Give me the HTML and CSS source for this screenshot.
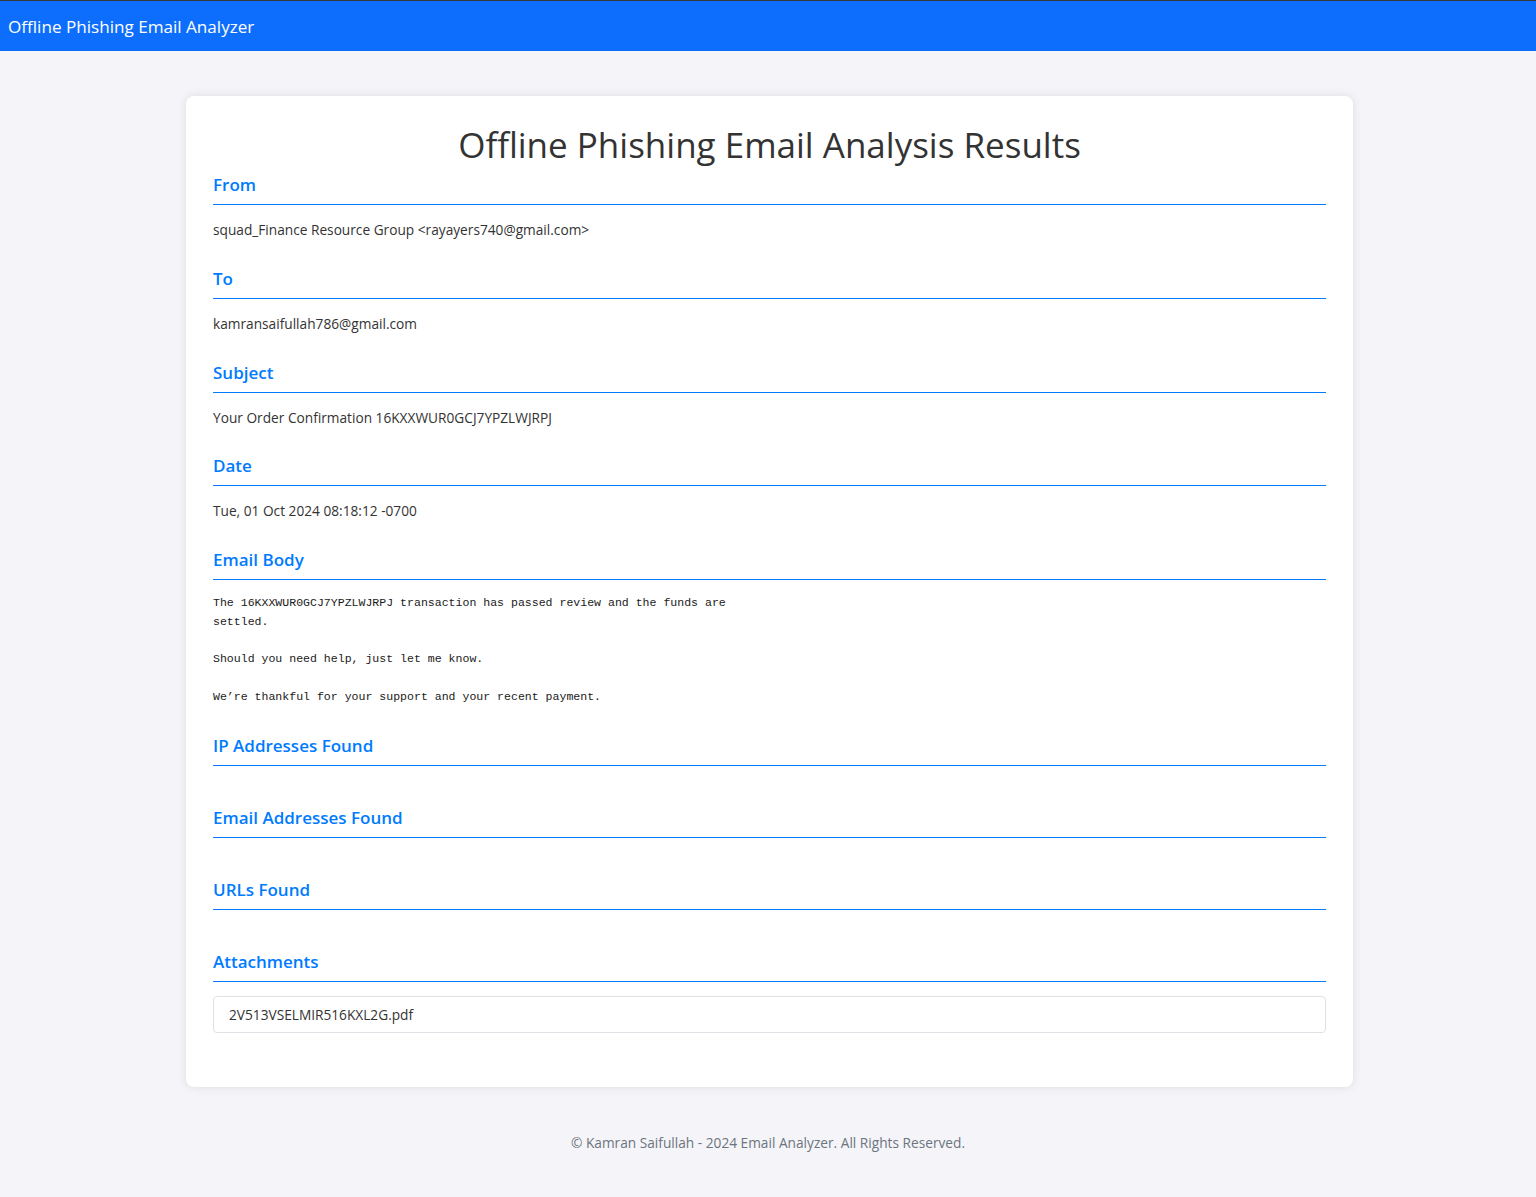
FILE: index.html
```html
<!DOCTYPE html>
<html lang="en">
<head>
<meta charset="utf-8">
<title>Offline Phishing Email Analyzer</title>
<link rel="stylesheet" href="styles.css">
</head>
<body>
<nav class="navbar"><span class="brand">Offline Phishing Email Analyzer</span></nav>
<main class="card">
  <h1 class="title">Offline Phishing Email Analysis Results</h1>
  <h3 class="sec-title">From</h3>
  <p class="field">squad_Finance Resource Group &lt;rayayers740@gmail.com&gt;</p>
  <h3 class="sec-title">To</h3>
  <p class="field">kamransaifullah786@gmail.com</p>
  <h3 class="sec-title">Subject</h3>
  <p class="field">Your Order Confirmation 16KXXWUR0GCJ7YPZLWJRPJ</p>
  <h3 class="sec-title">Date</h3>
  <p class="field">Tue, 01 Oct 2024 08:18:12 -0700</p>
  <h3 class="sec-title">Email Body</h3>
  <pre class="body-text">The 16KXXWUR0GCJ7YPZLWJRPJ transaction has passed review and the funds are
settled.

Should you need help, just let me know.

We’re thankful for your support and your recent payment.</pre>
  <h3 class="sec-title">IP Addresses Found</h3>
  <ul class="list"></ul>
  <h3 class="sec-title">Email Addresses Found</h3>
  <ul class="list"></ul>
  <h3 class="sec-title">URLs Found</h3>
  <ul class="list"></ul>
  <h3 class="sec-title">Attachments</h3>
  <ul class="list">
    <li class="list-item">2V513VSELMIR516KXL2G.pdf</li>
  </ul>
</main>
<footer class="footer">© Kamran Saifullah - 2024 Email Analyzer. All Rights Reserved.</footer>
</body>
</html>
```
FILE: styles.css
```css
html, body {
  margin: 0;
  padding: 0;
}
body {
  background: #f4f4f9;
  font-family: "Open Sans", "Noto Sans", sans-serif;
  font-size: 13.7px;
  color: #333;
  min-height: 1197px;
}
.navbar {
  box-sizing: border-box;
  height: 51px;
  background: #0d6efd;
  border-top: 1px solid #3a3a3a;
  display: flex;
  align-items: center;
  padding: 0 8px;
}
.brand {
  color: #fff;
  font-size: 17.1px;
  line-height: 24px;
  padding-top: 1px;
}
.card {
  display: flex;
  flex-direction: column;
  box-sizing: border-box;
  width: 1167px;
  margin: 45px 0 0 calc(50% - 582px);
  padding: 27px 27px 40px;
  background: #fff;
  border-radius: 8px;
  box-shadow: 0 0 10px rgba(0, 0, 0, 0.1);
}
.title {
  margin: 0 0 7px;
  text-align: center;
  font-size: 35px;
  line-height: 43px;
  font-weight: 500;
  color: #333;
}
.sec-title {
  margin: 12px 0 14px;
  padding-bottom: 7px;
  border-bottom: 1px solid #007bff;
  color: #007bff;
  font-size: 17px;
  line-height: 24px;
  font-weight: 600;
}
.title + .sec-title {
  margin-top: 0;
}
.field {
  margin: 0 0 13.75px;
  line-height: 22px;
}
.body-text {
  margin: 0 0 15.5px;
  font-family: "Liberation Mono", monospace;
  font-size: 11.55px;
  line-height: 18.8px;
  color: #1a1a1a;
  white-space: pre;
}
.list {
  list-style: none;
  margin: 0 0 14px;
  padding: 0;
}
.list-item {
  border: 1px solid #dee2e6;
  border-radius: 4px;
  padding: 7px 15px;
  line-height: 21px;
}
.footer {
  margin-top: 45px;
  text-align: center;
  color: #6c757d;
  font-size: 13.7px;
  line-height: 21px;
}
```
